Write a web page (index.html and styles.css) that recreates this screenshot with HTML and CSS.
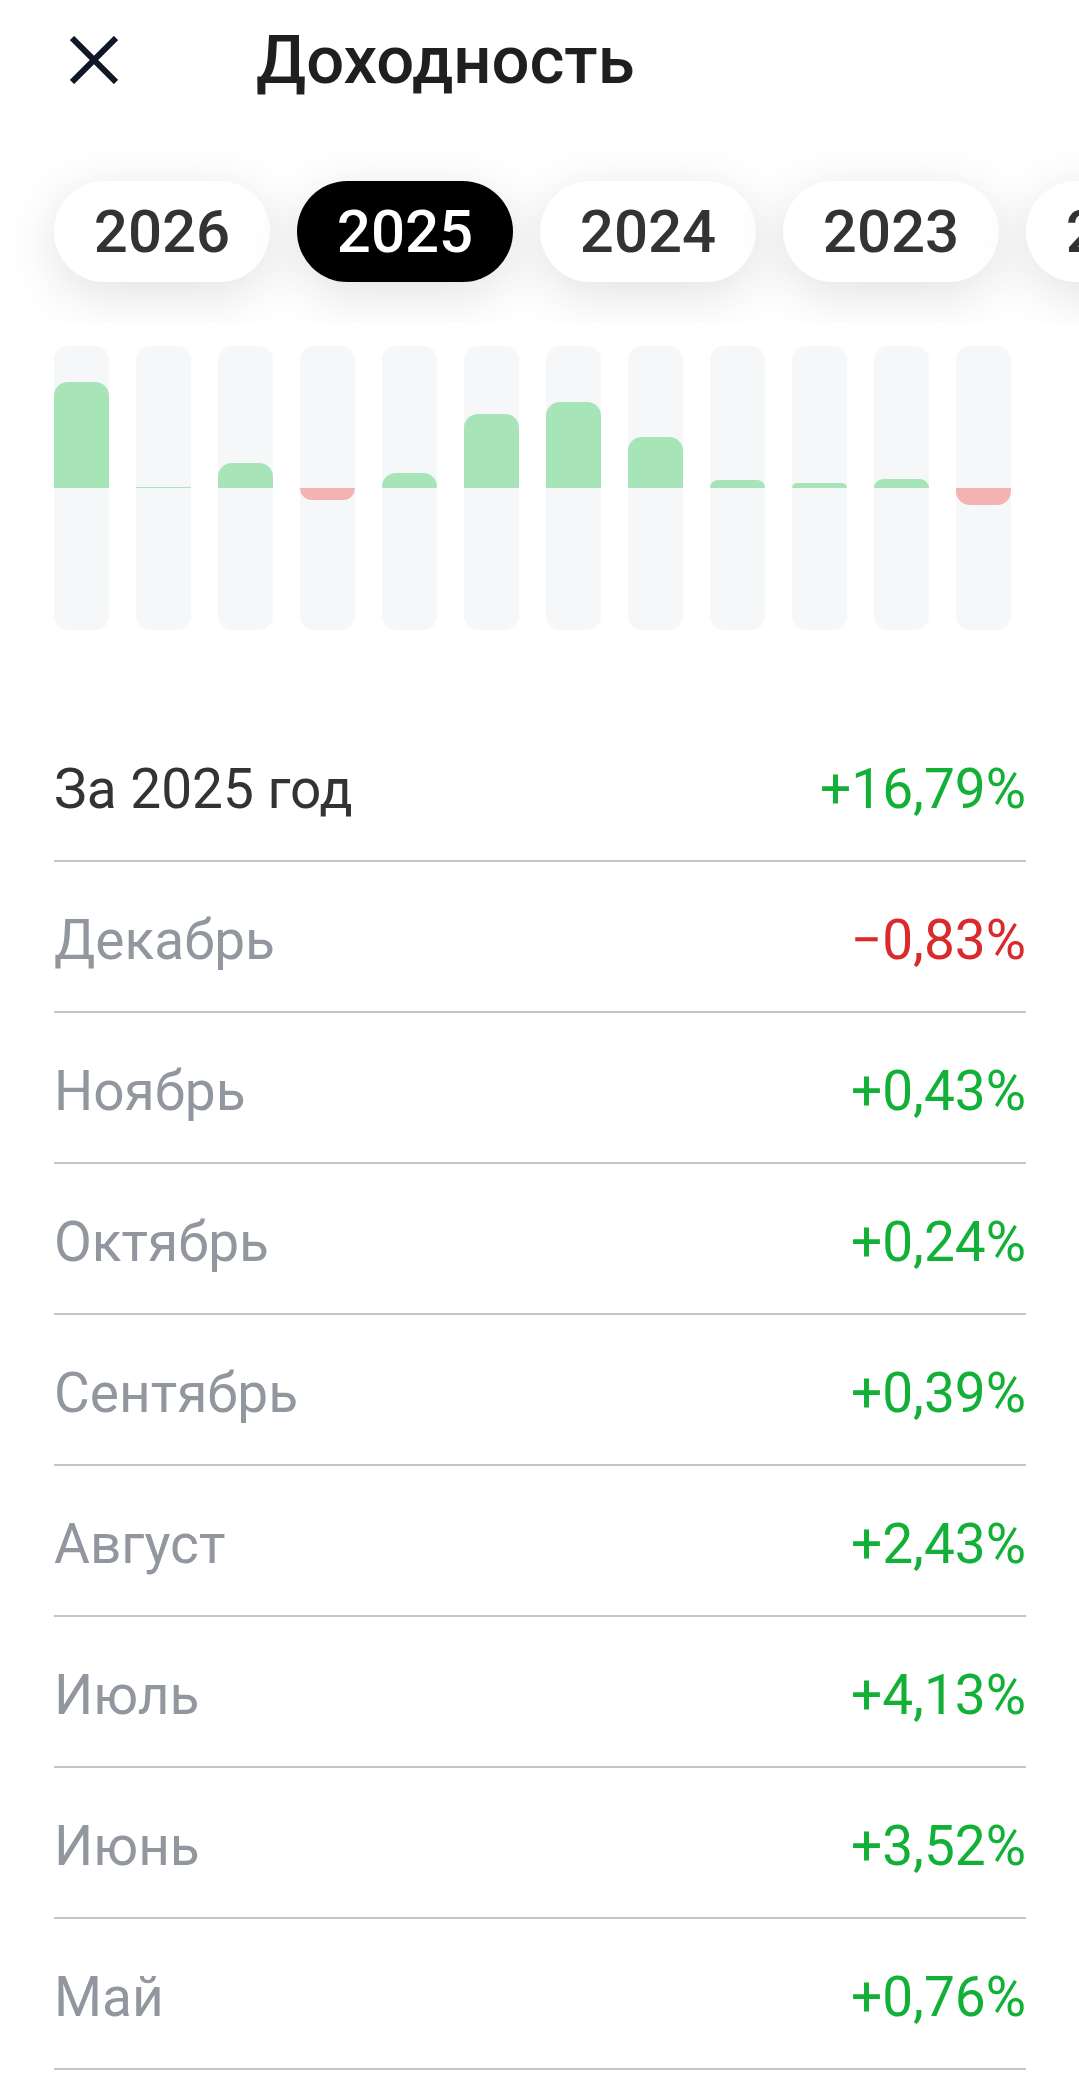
FILE: index.html
```html
<!DOCTYPE html>
<html lang="ru">
<head>
<meta charset="utf-8">
<meta name="viewport" content="width=device-width, initial-scale=1">
<title>Доходность</title>
<link rel="stylesheet" href="styles.css">
</head>
<body>
<header class="header">
  <button class="close" type="button" aria-label="Закрыть">
    <svg class="close-icon" viewBox="0 0 48 48" aria-hidden="true"><path d="M2 2 46 46M46 2 2 46"/></svg>
  </button>
  <h1 class="title">Доходность</h1>
</header>
<main>
  <nav class="years" aria-label="Год">
    <button class="year" type="button">2026</button>
    <button class="year year-active" type="button" aria-pressed="true">2025</button>
    <button class="year" type="button">2024</button>
    <button class="year" type="button">2023</button>
    <button class="year" type="button">2022</button>
  </nav>
  <div class="chart" role="img" aria-label="Доходность по месяцам">
    <div class="track"><div class="bar gain" style="height:106px"></div></div>
    <div class="track"><div class="bar gain" style="height:1px"></div></div>
    <div class="track"><div class="bar gain" style="height:25px"></div></div>
    <div class="track"><div class="bar loss" style="height:12px"></div></div>
    <div class="track"><div class="bar gain" style="height:15px"></div></div>
    <div class="track"><div class="bar gain" style="height:74px"></div></div>
    <div class="track"><div class="bar gain" style="height:86px"></div></div>
    <div class="track"><div class="bar gain" style="height:51px"></div></div>
    <div class="track"><div class="bar gain" style="height:8px"></div></div>
    <div class="track"><div class="bar gain" style="height:5px"></div></div>
    <div class="track"><div class="bar gain" style="height:9px"></div></div>
    <div class="track"><div class="bar loss" style="height:17px"></div></div>
  </div>
  <table class="returns">
    <tbody>
      <tr class="total"><th scope="row">За 2025 год</th><td class="up">+16,79%</td></tr>
      <tr><th scope="row">Декабрь</th><td class="down">−0,83%</td></tr>
      <tr><th scope="row">Ноябрь</th><td class="up">+0,43%</td></tr>
      <tr><th scope="row">Октябрь</th><td class="up">+0,24%</td></tr>
      <tr><th scope="row">Сентябрь</th><td class="up">+0,39%</td></tr>
      <tr><th scope="row">Август</th><td class="up">+2,43%</td></tr>
      <tr><th scope="row">Июль</th><td class="up">+4,13%</td></tr>
      <tr><th scope="row">Июнь</th><td class="up">+3,52%</td></tr>
      <tr><th scope="row">Май</th><td class="up">+0,76%</td></tr>
    </tbody>
  </table>
</main>
</body>
</html>
```
FILE: styles.css
```css
* {
  box-sizing: border-box;
}

body {
  margin: 0;
  background: #fff;
  color: #333;
  font-family: Roboto, "Liberation Sans", sans-serif;
}

button {
  border: 0;
  font-family: inherit;
  cursor: pointer;
}

.header {
  display: flex;
  align-items: center;
  gap: 122px;
  height: 120px;
  padding: 0 54px;
}

.close {
  display: flex;
  padding: 16px;
  background: none;
}

.close-icon {
  width: 48px;
  height: 48px;
  fill: none;
  stroke: #101828;
  stroke-width: 6;
}

.title {
  margin: 0;
  color: #1f1f1f;
  font-size: 67px;
  font-weight: 500;
  line-height: 80px;
}

.years {
  display: flex;
  gap: 27px;
  padding: 61px 54px 41px;
  overflow: hidden;
}

.year {
  flex: none;
  width: 216px;
  height: 101px;
  padding: 0;
  border-radius: 51px;
  background: #fff;
  color: #333;
  font-size: 60px;
  font-weight: 500;
  line-height: 72px;
  box-shadow: 0 12px 54px rgba(0, 0, 0, 0.12);
}

.year-active {
  background: #000;
  color: #fff;
}

.chart {
  display: flex;
  gap: 27px;
  padding: 23px 68px 81px 54px;
}

.track {
  display: grid;
  grid-template-rows: 1fr 1fr;
  flex: 1;
  height: 284px;
  border-radius: 14px;
  background: #f5f7f8;
}

.gain {
  align-self: end;
  border-radius: 14px 14px 0 0;
  background: #a7e5b8;
}

.loss {
  grid-row: 2;
  border-radius: 0 0 14px 14px;
  background: #f5b2b4;
}

.returns {
  width: calc(100% - 107px);
  margin: 0 53px 0 54px;
  border-collapse: separate;
  border-spacing: 0;
  font-size: 55px;
  line-height: 64px;
}

.returns th,
.returns td {
  padding: 46px 0 39px;
  border-bottom: 2px solid #c6c6c6;
  font-weight: 400;
}

.returns th {
  color: #92979f;
  text-align: left;
}

.returns td {
  text-align: right;
}

.returns .total th {
  color: #333;
}

.returns .up {
  color: #12b037;
}

.returns .down {
  color: #d92b2b;
}
```
